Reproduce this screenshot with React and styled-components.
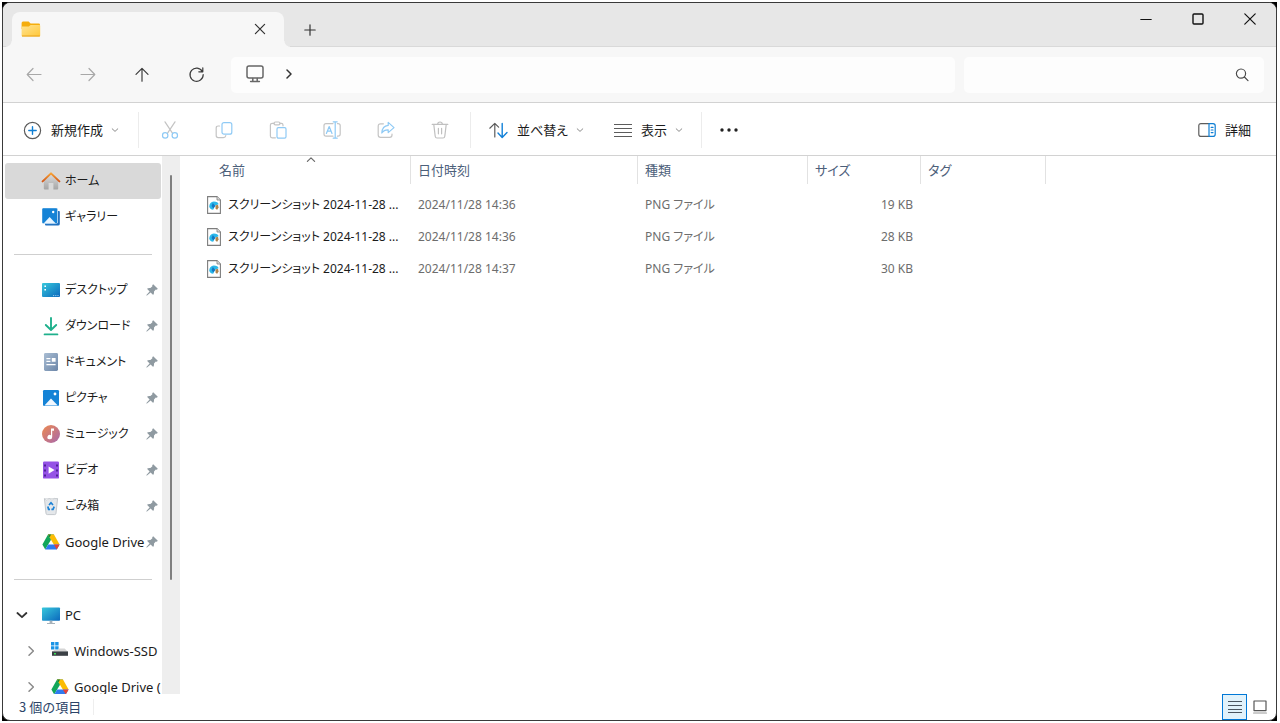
import React from "react";
import styled, { createGlobalStyle } from "styled-components";

const GlobalStyle = createGlobalStyle`
  * {
    box-sizing: border-box;
  }
  body {
    margin: 0;
    background: #fff;
    color: #1b1b1b;
    font-family: "Noto Sans", "Noto Sans CJK JP", sans-serif;
    font-size: 13px;
    line-height: 20px;
  }
  button {
    border: none;
    padding: 0;
    background: none;
    color: inherit;
    font: inherit;
  }
  svg {
    display: block;
    flex: none;
  }
`;

const Desktop = styled.div`
  height: 100vh;
  padding: 2px 3px 2px 2px;
`;

const Backdrop = styled.div`
  height: 100%;
  background: #000;
`;

const Window = styled.div`
  height: 100%;
  display: flex;
  flex-direction: column;
  overflow: hidden;
  border: 1px solid #3a3a3a;
  border-radius: 8px;
  background: #fff;
`;

/* ---------- title bar ---------- */

const TitleBar = styled.header`
  display: flex;
  height: 44px;
  padding-left: 9px;
  background: #e7e7e7;
  box-shadow: inset 0 -1px #d9d9d9;
`;

const Tab = styled.div`
  position: relative;
  display: flex;
  align-items: center;
  justify-content: space-between;
  width: 272px;
  margin-top: 9px;
  padding: 0 17px 2px 9px;
  border-radius: 8px 8px 0 0;
  background: #f7f7f7;

  &::before,
  &::after {
    content: "";
    position: absolute;
    bottom: 0;
    width: 6px;
    height: 6px;
  }
  &::before {
    left: -6px;
    background: radial-gradient(circle at 0 0, transparent 5px, #f7f7f7 6px);
  }
  &::after {
    right: -6px;
    background: radial-gradient(circle at 100% 0, transparent 5px, #f7f7f7 6px);
  }
`;

const TabButton = styled.button`
  display: flex;
  align-items: center;
  justify-content: center;
  width: 14px;
  height: 32px;
`;

const NewTabButton = styled(TabButton)`
  width: 52px;
  margin-top: 11px;
`;

const WindowControls = styled.div`
  display: flex;
  margin-left: auto;
`;

const ControlButton = styled.button`
  display: flex;
  align-items: center;
  justify-content: center;
  width: 52px;
  height: 32px;
`;

/* ---------- navigation ---------- */

const NavBar = styled.div`
  display: flex;
  align-items: center;
  height: 56px;
  padding: 0 12px 0 4px;
  border-bottom: 1px solid #d2d2d2;
  background: #f7f7f7;
`;

const NavButton = styled.button`
  display: flex;
  align-items: center;
  justify-content: center;
  width: 54px;
  height: 36px;
  color: ${(props) => (props.disabled ? "#a8a8a8" : "#3c3c3c")};
`;

const AddressBar = styled.nav`
  display: flex;
  flex: 1;
  align-items: center;
  gap: 19px;
  height: 36px;
  margin-left: 8px;
  padding: 0 0 2px 14px;
  border-radius: 5px;
  background: #fdfdfd;
`;

const CrumbButton = styled.button`
  display: flex;
  color: #4a4a4a;
`;

const SearchBox = styled.label`
  display: flex;
  align-items: center;
  width: 300px;
  height: 36px;
  margin-left: 9px;
  padding-right: 15px;
  border-radius: 5px;
  background: #fdfdfd;
`;

const SearchInput = styled.input`
  flex: 1;
  min-width: 0;
  height: 32px;
  padding: 0 12px;
  border: none;
  outline: none;
  background: none;
  font: inherit;
`;

/* ---------- command bar ---------- */

const CommandBar = styled.div`
  display: flex;
  align-items: center;
  height: 53px;
  padding: 2px 25px 0 20px;
  border-bottom: 1px solid #d2d2d2;
`;

const Command = styled.button`
  display: flex;
  align-items: center;
  height: 36px;
  white-space: nowrap;
  font-family: "Noto Sans CJK JP", sans-serif;
  font-feature-settings: "palt";
`;

const CommandLabel = styled.span`
  margin: 0 8px 0 9px;
`;

const IconCommand = styled.button`
  display: flex;
  align-items: center;
  justify-content: center;
  width: 54px;
  height: 36px;
`;

const Divider = styled.span`
  width: 1px;
  height: 36px;
  background: #ececec;
`;

const SortGroup = styled.div`
  display: flex;
  gap: 30px;
  padding: 0 18px;
`;

const IconGroup = styled.div`
  display: flex;
  padding: 0 3px 0 4px;
`;

const NewGroup = styled.div`
  padding-right: 19px;
`;

const DetailsCommand = styled(Command)`
  gap: 9px;
  margin-left: auto;
`;

/* ---------- body ---------- */

const Body = styled.div`
  display: flex;
  flex: 1;
  min-height: 0;
`;

const Sidebar = styled.nav`
  display: flex;
  width: 177px;
  flex: none;
`;

const Tree = styled.div`
  flex: 1;
  min-width: 0;
  padding: 7px 1px 0 2px;
  overflow: hidden;
`;

const ScrollTrack = styled.div`
  width: 18px;
  padding: 19px 0 0 8px;
  background: #eeeeee;
`;

const ScrollThumb = styled.div`
  width: 2px;
  height: 78%;
  border-radius: 1px;
  background: #808080;
`;

const TreeItem = styled.a`
  display: flex;
  align-items: center;
  height: 36px;
  padding-left: ${(props) => (props.$nested ? 18 : 9)}px;
  border-radius: 3px;
  background: ${(props) => (props.$active ? "#d9d9d9" : "none")};
  color: #1b1b1b;
  text-decoration: none;
  white-space: nowrap;
  overflow: hidden;
`;

const Twisty = styled.span`
  display: flex;
  flex: none;
  width: 27px;
`;

const ItemLabel = styled.span`
  flex: 1;
  margin-left: 4px;

  &:lang(ja) {
    font-size: 12px;
    font-feature-settings: "palt";
  }
`;

const PinSlot = styled.span`
  padding-right: 3px;
`;

const TreeRule = styled.hr`
  height: 1px;
  margin: 19px 9px 17px;
  border: none;
  background: #cfcfcf;
`;

const Content = styled.main`
  flex: 1;
  min-width: 0;
  margin-left: 4px;
`;

const FileTable = styled.table`
  width: 100%;
  border-collapse: collapse;
  table-layout: fixed;
`;

const Col = styled.col`
  width: ${(props) => props.$width}px;
`;

const HeadCell = styled.th`
  position: relative;
  padding: 0 0 5px;
  text-align: left;
  font-weight: 400;
  color: #4c607a;
  font-feature-settings: "palt";
`;

const HeadLabel = styled.div`
  height: 28px;
  padding-left: ${(props) => (props.$first ? 35 : 7)}px;
  border-right: 1px solid #e2e2e2;
  line-height: 28px;
`;

const SortMark = styled.span`
  position: absolute;
  top: 0;
  left: 122px;
`;

const Cell = styled.td`
  height: 32px;
  padding: 0 8px 0 7px;
  text-align: ${(props) => (props.$right ? "right" : "left")};
  color: #6d6d6d;
  font-size: 12px;
  font-feature-settings: "palt";
  white-space: nowrap;
`;

const FileName = styled.div`
  display: flex;
  align-items: center;
  gap: 7px;
  padding-left: 16px;
  color: #1b1b1b;
`;

/* ---------- status bar ---------- */

const StatusBar = styled.footer`
  display: flex;
  align-items: center;
  height: 26px;
  padding: 0 4px 0 16px;
  color: #2b4468;
  font-family: "Noto Sans CJK JP", sans-serif;
`;

const StatusDivider = styled.span`
  width: 1px;
  height: 16px;
  margin-left: 12px;
  background: #eeeeee;
`;

const ViewButtons = styled.div`
  display: flex;
  margin-left: auto;
`;

const ViewButton = styled.button`
  display: flex;
  align-items: center;
  justify-content: center;
  width: 25px;
  height: 26px;
  border: 1px solid ${(props) => (props.$active ? "#0078d7" : "transparent")};
  background: ${(props) => (props.$active ? "#e1f2fb" : "none")};
`;

/* ---------- icons ---------- */

function Line({ size = 18, color = "currentColor", width = 1.2, d, children }) {
  return (
    <svg width={size} height={size} viewBox={`0 0 ${size} ${size}`} fill="none" stroke={color} strokeWidth={width} strokeLinecap="round" strokeLinejoin="round">
      {d && <path d={d} />}
      {children}
    </svg>
  );
}

const FolderIcon = () => (
  <svg width="20" height="18" viewBox="0 0 20 18">
    <defs>
      <linearGradient id="folder" x1="0" y1="0" x2="1" y2="1">
        <stop offset="0" stopColor="#ffe391" />
        <stop offset="1" stopColor="#ffc83a" />
      </linearGradient>
    </defs>
    <path d="M.6 3.2Q.6 1.6 2 1.6H7.6L9.6 3.6H17.8Q19 3.6 19 4.8V9H.6Z" fill="#f5ad0c" />
    <path d="M.6 6.6H7.8L9.6 5H18.4Q19.2 5 19.2 5.8V15.4Q19.2 16.4 18.2 16.4H1.6Q.6 16.4.6 15.4Z" fill="url(#folder)" />
    <path d="M1 16H18.8" stroke="#e8a21b" strokeWidth="1" />
  </svg>
);

const ChevronDown = () => <Line size={8} width={1} color="#8a8a8a" d="M1.2 2.8L4 5.4L6.8 2.8" />;

const MonitorIcon = () => (
  <Line size={20} color="#666" width={1.5}>
    <rect x="2" y="2" width="16" height="12" rx="2" />
    <path d="M7.8 14.4V16.6M12.2 14.4V16.6M5.6 17.4H14.4" />
  </Line>
);

const NewIcon = () => (
  <Line size={19} color="#5c5c5c">
    <circle cx="9.5" cy="9.5" r="8.1" />
    <path d="M9.5 5.8V13.2M5.8 9.5H13.2" stroke="#0f7fd4" strokeWidth="1.4" />
  </Line>
);

const CutIcon = () => (
  <Line color="#c4c4c4">
    <path d="M4 .8L11.6 12.4M14 .8L6.4 12.4" />
    <circle cx="4.2" cy="14.4" r="2.7" stroke="#8fcaf5" />
    <circle cx="13.8" cy="14.4" r="2.7" stroke="#8fcaf5" />
  </Line>
);

const CopyIcon = () => (
  <Line color="#c4c4c4">
    <path d="M4.6 5H3.2Q1.2 5 1.2 7V14.6Q1.2 16.6 3.2 16.6H8.4Q10.4 16.6 10.8 14.6" />
    <rect x="7" y="1.6" width="9.8" height="11.6" rx="2" stroke="#8fcaf5" />
  </Line>
);

const PasteIcon = () => (
  <Line color="#c4c4c4">
    <path d="M6.4 16.8H3.2Q1.4 16.8 1.4 15V4Q1.4 2.4 3.2 2.4H5M11 2.4H12.4Q14 2.4 14 4V4.8" />
    <rect x="5" y="1" width="6" height="2.8" rx="1.4" />
    <rect x="8" y="6.6" width="9" height="10.6" rx="1.4" stroke="#8fcaf5" />
  </Line>
);

const RenameIcon = () => (
  <Line color="#c4c4c4">
    <path d="M10 2.6H3Q1 2.6 1 4.6V13Q1 15.2 3 15.2H10M14.4 2.6H15Q17.2 2.6 17.2 4.6V13Q17.2 15.2 15 15.2H14.4" />
    <path d="M3.4 12.4L6.2 5.6L9 12.4M4.4 10.2H8M12.2 1V17M10.2 .8H14.2M10.2 17.2H14.2" stroke="#8fcaf5" />
  </Line>
);

const ShareIcon = () => (
  <Line color="#c4c4c4">
    <path d="M6.4 2.8H3.6Q1.2 2.8 1.2 5.2V14Q1.2 16.4 3.6 16.4H12.6Q15 16.4 15 14V13" />
    <path d="M11.2 1.4L17 6.6L11.2 11.6V8.8Q7 8.6 4.8 12Q5.2 5 11.2 4.4Z" stroke="#8fcaf5" />
  </Line>
);

const TrashIcon = () => (
  <Line color="#c0c0c0">
    <path d="M1.2 3.4H16.8M6.6 3.2Q6.8 1 9 1T11.4 3.2M2.8 3.6L4.2 15.2Q4.4 17 6 17H12Q13.6 17 13.8 15.2L15.2 3.6M7.4 7.4V12.8M10.6 7.4V12.8" />
  </Line>
);

const SortIcon = () => (
  <Line size={19} color="#5c5c5c">
    <path d="M5.8 16V2.6M.8 7.2L5.8 2.4L9.6 6.2" />
    <path d="M13.2 2.4V16.2M9 12L13.2 16.4L18 11.6" stroke="#1180d8" strokeWidth="1.4" />
  </Line>
);

const ViewIcon = () => <Line color="#5c5c5c" d="M.5 3.5H17.5M.5 7.5H17.5M.5 11.5H17.5M.5 15.5H17.5" />;

const DetailsPaneIcon = () => (
  <Line size={18} color="#5c5c5c">
    <path d="M10.6 2.6H3Q.8 2.6 .8 4.8V13.2Q.8 15.4 3 15.4H10.6" />
    <path d="M11 2.6H15Q17.2 2.6 17.2 4.8V13.2Q17.2 15.4 15 15.4H11ZM13.2 6.4H15M13.2 9H15M13.2 11.6H15" stroke="#0f7fd4" />
  </Line>
);

const HomeIcon = () => (
  <svg width="20" height="20" viewBox="0 0 20 20">
    <defs>
      <linearGradient id="wall" x1="0" y1="0" x2="0" y2="1">
        <stop offset="0" stopColor="#dcdcdc" />
        <stop offset="1" stopColor="#a4a4a4" />
      </linearGradient>
      <linearGradient id="roof" x1="0" y1="0" x2="0" y2="1">
        <stop offset="0" stopColor="#f7a032" />
        <stop offset="1" stopColor="#d2591b" />
      </linearGradient>
    </defs>
    <path d="M2.8 9.6L10 3.2L17.2 9.6V17.6Q17.2 18.6 16.2 18.6H12.4V12H7.6V18.6H3.8Q2.8 18.6 2.8 17.6Z" fill="url(#wall)" />
    <path d="M1.6 10.4L10 2.4L18.4 10.4" fill="none" stroke="url(#roof)" strokeWidth="2" strokeLinecap="round" strokeLinejoin="round" />
  </svg>
);

const GalleryIcon = () => (
  <svg width="20" height="20" viewBox="0 0 20 20">
    <path d="M4 16H17V4H18Q18.8 4 18.8 5V17Q18.8 18.6 17 18.6H5Q4 18.6 4 17.6Z" fill="#1d6fc0" />
    <rect x="1" y="1" width="15.6" height="15.6" rx="1.4" fill="#1583d6" stroke="#fff" strokeWidth=".4" />
    <path d="M2.6 16.4L8.6 10L14.8 16.4Z" fill="#e9f5ff" />
    <circle cx="12.2" cy="5" r="1.2" fill="#fff" />
  </svg>
);

const DesktopIcon = () => (
  <svg width="20" height="20" viewBox="0 0 20 20">
    <defs>
      <linearGradient id="screen" x1="0" y1="0" x2="1" y2="1">
        <stop offset="0" stopColor="#37c8dc" />
        <stop offset="1" stopColor="#0b68bd" />
      </linearGradient>
    </defs>
    <rect x="1" y="3" width="18" height="14" rx="1" fill="url(#screen)" />
    <path d="M3.4 5.4H5V7H3.4ZM3.4 9H5V10.6H3.4Z" fill="#fff" />
    <path d="M12 15.6H18" stroke="#bfe3f7" strokeWidth=".8" strokeDasharray="1.2 1" />
  </svg>
);

const DownloadIcon = () => (
  <Line size={20} color="#1fb08c" width={1.9}>
    <path d="M10 2V13.6M4.8 9L10 14L15.2 9M3.6 18.4H16.4" />
  </Line>
);

const DocumentIcon = () => (
  <svg width="20" height="20" viewBox="0 0 20 20">
    <defs>
      <linearGradient id="paper" x1="0" y1="0" x2="1" y2="1">
        <stop offset="0" stopColor="#a9bdd3" />
        <stop offset="1" stopColor="#6c86a8" />
      </linearGradient>
    </defs>
    <rect x="3" y="1" width="14" height="18" rx="1.4" fill="url(#paper)" />
    <path d="M5.4 6.6H9.4M5.4 9.4H9.4M5.4 12.6H14.6" stroke="#fff" strokeWidth="1.3" />
    <path d="M10.8 6H14.6V9.8H10.8Z" fill="#fff" />
  </svg>
);

const PictureIcon = () => (
  <svg width="20" height="20" viewBox="0 0 20 20">
    <rect x="2" y="2" width="16" height="16" rx="1.2" fill="#1583d6" />
    <path d="M3.4 17.4L10 10.4L16.8 17.4Z" fill="#f1f8ff" />
    <circle cx="14" cy="6" r="1.4" fill="#fff" />
  </svg>
);

const MusicIcon = () => (
  <svg width="20" height="20" viewBox="0 0 20 20">
    <defs>
      <linearGradient id="disc" x1="0" y1="0" x2="1" y2="1">
        <stop offset="0" stopColor="#ee8a4f" />
        <stop offset="1" stopColor="#a768ad" />
      </linearGradient>
    </defs>
    <circle cx="10" cy="10" r="9" fill="url(#disc)" />
    <path d="M10 4.4H13V6.8H11.2V13A2.4 2.2 0 1 1 10 11.2Z" fill="#fff" />
  </svg>
);

const VideoIcon = () => (
  <svg width="20" height="20" viewBox="0 0 20 20">
    <rect x="2" y="1.6" width="16" height="17" rx="1.2" fill="#9553e6" />
    <path d="M4 4.4V17.6M16 4.4V17.6" stroke="#4e2394" strokeWidth="2" strokeDasharray="2 3" />
    <path d="M7.6 6.4L13.6 10L7.6 13.8Z" fill="#fff" />
  </svg>
);

const BinIcon = () => (
  <svg width="20" height="20" viewBox="0 0 20 20">
    <path d="M3.4 2.6H16.6L15 17.4Q14.8 18.6 13.6 18.6H6.4Q5.2 18.6 5 17.4Z" fill="#e4e7ea" stroke="#b7bdc2" strokeWidth=".8" />
    <path d="M3.4 2.6L6 4.4L8 2.2L11 4.2L13.4 2.4L16.6 2.8" fill="#fff" stroke="#c8cdd1" strokeWidth=".8" />
    <path d="M8 9L10 6.8L12 9M13.2 10.6L12 13.4H10.4M9 13.4H7.6L6.8 10.6" fill="none" stroke="#1b82d6" strokeWidth="1.7" />
  </svg>
);

const DriveIcon = () => (
  <svg width="20" height="20" viewBox="0 0 20 20">
    <path d="M7 2.6H13L10 7.8Z" fill="#188038" />
    <path d="M7 2.6L10 7.8L4.2 17.4L1.4 12.6Z" fill="#11a65a" />
    <path d="M13 2.6L18.6 12.4H12.8L10 7.8L7 2.6Z" fill="#fbbc04" />
    <path d="M7 2.6H10L8.6 5.4Z" fill="#188038" />
    <path d="M7.2 12.4H18.6L15.8 17.4H4.2Z" fill="#2f7bf0" />
    <path d="M12.8 12.4H18.6L15.8 17.4Z" fill="#ea4335" />
  </svg>
);

const PcIcon = () => (
  <svg width="20" height="20" viewBox="0 0 20 20">
    <rect x="1" y="2.4" width="18" height="13.4" rx=".8" fill="url(#screen)" />
    <path d="M8.6 15.8H11.4V18H14V19H6V18H8.6Z" fill="#a7b2ba" />
  </svg>
);

const DiskIcon = () => (
  <svg width="20" height="20" viewBox="0 0 20 20">
    <path d="M1 1H4.4V4.4H1ZM5.2 1H8.6V4.4H5.2ZM1 5.2H4.4V8.6H1ZM5.2 5.2H8.6V8.6H5.2Z" fill="#1a94e6" />
    <path d="M8.6 7.6H14.6L17.6 10.4H3L4 9H8.6Z" fill="#d5d5d5" />
    <rect x="2" y="10.4" width="16" height="4.4" fill="#3b4045" />
    <path d="M4 12.8H6" stroke="#3ddc58" strokeWidth="1.4" />
  </svg>
);

const PinIcon = () => (
  <svg width="12" height="12" viewBox="0 0 12 12">
    <path d="M7.2.2L11.8 4.8L10.8 5.8L9.8 5.6L8 7.6Q8.4 9.6 7.2 11L4.6 8.4L1 11.6L.4 11.6V11L3.6 7.4L1 4.8Q2.4 3.6 4.4 4L6.4 2.2L6.2 1.2Z" fill="#8f9aa1" />
  </svg>
);

const PngIcon = () => (
  <svg width="14" height="18" viewBox="0 0 14 18">
    <path d="M.6.6H10L13.4 4V17.4H.6Z" fill="#fff" stroke="#7d7d7d" strokeWidth="1.1" />
    <path d="M10 .6V4H13.4" fill="#ddd" stroke="#7d7d7d" strokeWidth=".8" />
    <path d="M2.2 10.6Q2.6 6.2 6.8 5.6Q11 5.6 11.6 8.2L8 9.8L6.2 13.8Q2.8 13.6 2.2 10.6Z" fill="#2bb8ea" />
    <path d="M5.8 7L8.4 10L6.2 12.4L4.6 10Z" fill="#1277c4" />
    <path d="M8.4 9.6L11 8.8L11.6 11.6L10 14L8.6 12.2Z" fill="#b0834a" />
  </svg>
);

const places = [
  { name: "デスクトップ", icon: DesktopIcon },
  { name: "ダウンロード", icon: DownloadIcon },
  { name: "ドキュメント", icon: DocumentIcon },
  { name: "ピクチャ", icon: PictureIcon },
  { name: "ミュージック", icon: MusicIcon },
  { name: "ビデオ", icon: VideoIcon },
  { name: "ごみ箱", icon: BinIcon },
  { name: "Google Drive", icon: DriveIcon, lang: "en" },
];

const files = [
  { id: 1, name: "スクリーンショット 2024-11-28 ...", date: "2024/11/28 14:36", type: "PNG ファイル", size: "19 KB" },
  { id: 2, name: "スクリーンショット 2024-11-28 ...", date: "2024/11/28 14:36", type: "PNG ファイル", size: "28 KB" },
  { id: 3, name: "スクリーンショット 2024-11-28 ...", date: "2024/11/28 14:37", type: "PNG ファイル", size: "30 KB" },
];

const editCommands = [
  { label: "切り取り", icon: CutIcon },
  { label: "コピー", icon: CopyIcon },
  { label: "貼り付け", icon: PasteIcon },
  { label: "名前の変更", icon: RenameIcon },
  { label: "共有", icon: ShareIcon },
  { label: "削除", icon: TrashIcon },
];

function Place({ name, icon: Icon, lang = "ja", active, nested, open, pinned }) {
  return (
    <TreeItem href="#" $active={active} $nested={nested}>
      <Twisty>
        {open && <Line size={14} width={1.8} color="#333" d="M3.4 5L8 9.2L12.4 5" />}
        {nested && <Line size={14} width={1.5} color="#8a8a8a" d="M6 2.8L10.4 7L6 11.2" />}
      </Twisty>
      <Icon />
      <ItemLabel lang={lang}>{name}</ItemLabel>
      {pinned && (
        <PinSlot>
          <PinIcon />
        </PinSlot>
      )}
    </TreeItem>
  );
}

function Explorer() {
  return (
    <Window>
      <TitleBar>
        <Tab>
          <FolderIcon />
          <TabButton aria-label="タブを閉じる">
            <Line size={12} color="#333" d="M1.4 1.4L10.6 10.6M10.6 1.4L1.4 10.6" />
          </TabButton>
        </Tab>
        <NewTabButton aria-label="新しいタブ">
          <Line size={12} color="#333" d="M6 .8V11.2M.8 6H11.2" />
        </NewTabButton>
        <WindowControls>
          <ControlButton aria-label="最小化">
            <Line size={12} color="#111" d="M.8 6.5H11.2" />
          </ControlButton>
          <ControlButton aria-label="最大化">
            <Line size={12} color="#111" width={1.4}>
              <rect x="1" y="1" width="10" height="10" rx="1" />
            </Line>
          </ControlButton>
          <ControlButton aria-label="閉じる">
            <Line size={12} color="#111" d="M.8.8L11.2 11.2M11.2.8L.8 11.2" />
          </ControlButton>
        </WindowControls>
      </TitleBar>

      <NavBar>
        <NavButton aria-label="戻る" disabled>
          <Line size={16} d="M15 7.5H1.4M7 1.5L1.2 7.5L7 13.5" />
        </NavButton>
        <NavButton aria-label="進む" disabled>
          <Line size={16} d="M1 7.5H14.6M9 1.5L14.8 7.5L9 13.5" />
        </NavButton>
        <NavButton aria-label="上へ">
          <Line size={16} d="M8 14.2V1.8M2 7.4L8 1.4L14 7.4" />
        </NavButton>
        <NavButton aria-label="最新の情報に更新">
          <Line size={16} d="M14.4 4.6A6.6 6.6 0 1 0 15.2 7.6M14.8 .8V4.8H10.8" />
        </NavButton>
        <AddressBar>
          <CrumbButton aria-label="PC">
            <MonitorIcon />
          </CrumbButton>
          <CrumbButton aria-label="場所を開く">
            <Line size={10} width={1.5} color="#333" d="M3 1L7 5L3 9" />
          </CrumbButton>
        </AddressBar>
        <SearchBox>
          <SearchInput type="search" aria-label="検索" />
          <Line size={14} color="#4a4a4a">
            <circle cx="6" cy="5.6" r="4.6" />
            <path d="M9.4 9L13 12.6" />
          </Line>
        </SearchBox>
      </NavBar>

      <CommandBar>
        <NewGroup>
          <Command>
            <NewIcon />
            <CommandLabel>新規作成</CommandLabel>
            <ChevronDown />
          </Command>
        </NewGroup>
        <Divider />
        <IconGroup>
          {editCommands.map(({ label, icon: Icon }) => (
            <IconCommand key={label} aria-label={label} disabled>
              <Icon />
            </IconCommand>
          ))}
        </IconGroup>
        <Divider />
        <SortGroup>
          <Command>
            <SortIcon />
            <CommandLabel>並べ替え</CommandLabel>
            <ChevronDown />
          </Command>
          <Command>
            <ViewIcon />
            <CommandLabel>表示</CommandLabel>
            <ChevronDown />
          </Command>
        </SortGroup>
        <Divider />
        <IconCommand aria-label="もっと見る">
          <svg width="18" height="4" viewBox="0 0 18 4" fill="#222">
            <circle cx="2" cy="2" r="1.7" />
            <circle cx="9" cy="2" r="1.7" />
            <circle cx="16" cy="2" r="1.7" />
          </svg>
        </IconCommand>
        <DetailsCommand>
          <DetailsPaneIcon />
          <span>詳細</span>
        </DetailsCommand>
      </CommandBar>

      <Body>
        <Sidebar>
          <Tree>
            <Place name="ホーム" icon={HomeIcon} active />
            <Place name="ギャラリー" icon={GalleryIcon} />
            <TreeRule />
            {places.map((place) => (
              <Place key={place.name} {...place} pinned />
            ))}
            <TreeRule />
            <Place name="PC" icon={PcIcon} lang="en" open />
            <Place name="Windows-SSD" icon={DiskIcon} lang="en" nested />
            <Place name="Google Drive (G:)" icon={DriveIcon} lang="en" nested />
          </Tree>
          <ScrollTrack>
            <ScrollThumb />
          </ScrollTrack>
        </Sidebar>
        <Content>
          <FileTable>
            <colgroup>
              <Col $width={227} />
              <Col $width={227} />
              <Col $width={170} />
              <Col $width={113} />
              <Col $width={125} />
              <col />
            </colgroup>
            <thead>
              <tr>
                <HeadCell aria-sort="ascending">
                  <HeadLabel $first>名前</HeadLabel>
                  <SortMark>
                    <Line size={10} color="#6a6a6a" d="M1.4 5.4L5 1.8L8.6 5.4" />
                  </SortMark>
                </HeadCell>
                <HeadCell><HeadLabel>日付時刻</HeadLabel></HeadCell>
                <HeadCell><HeadLabel>種類</HeadLabel></HeadCell>
                <HeadCell><HeadLabel>サイズ</HeadLabel></HeadCell>
                <HeadCell><HeadLabel>タグ</HeadLabel></HeadCell>
                <HeadCell as="td" />
              </tr>
            </thead>
            <tbody>
              {files.map((file) => (
                <tr key={file.id}>
                  <Cell>
                    <FileName>
                      <PngIcon />
                      {file.name}
                    </FileName>
                  </Cell>
                  <Cell>{file.date}</Cell>
                  <Cell>{file.type}</Cell>
                  <Cell $right>{file.size}</Cell>
                  <Cell />
                  <Cell />
                </tr>
              ))}
            </tbody>
          </FileTable>
        </Content>
      </Body>

      <StatusBar>
        <span>3 個の項目</span>
        <StatusDivider />
        <ViewButtons>
          <ViewButton $active aria-label="詳細表示">
            <Line size={14} color="#4a5560" d="M.5 1.5H13.5M.5 5.5H13.5M.5 9.5H13.5M.5 12.5H13.5" />
          </ViewButton>
          <ViewButton aria-label="大きい縮小版">
            <Line size={14} color="#555">
              <rect x="1" y="1" width="12" height="9.6" />
              <path d="M.6 13H13.4" stroke="#999" />
            </Line>
          </ViewButton>
        </ViewButtons>
      </StatusBar>
    </Window>
  );
}

export default function App() {
  return (
    <>
      <GlobalStyle />
      <Desktop>
        <Backdrop>
          <Explorer />
        </Backdrop>
      </Desktop>
    </>
  );
}
